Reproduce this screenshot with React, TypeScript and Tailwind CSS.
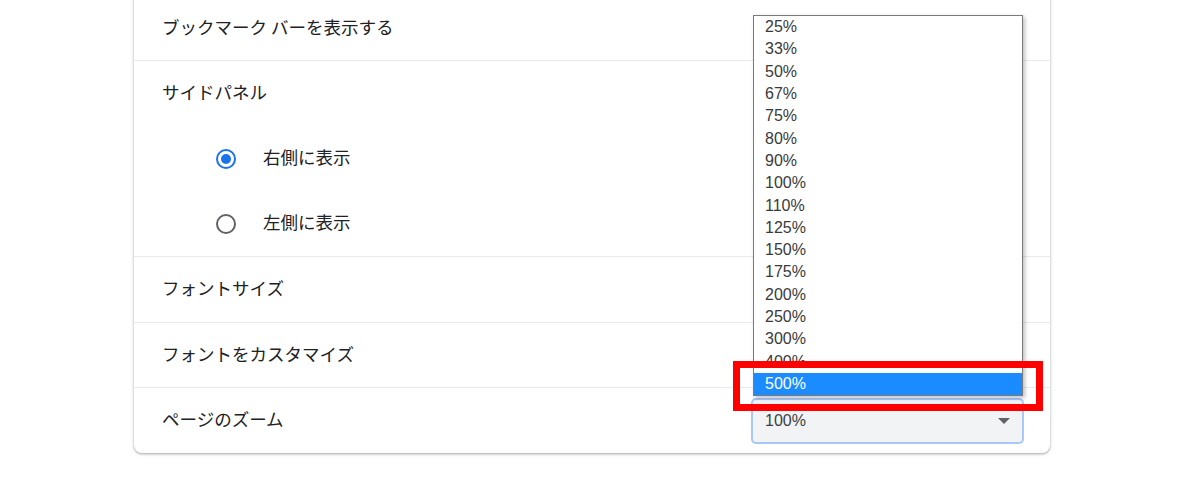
import { useMemo } from 'react'

const ZOOM_LEVELS = ['25%', '33%', '50%', '67%', '75%', '80%', '90%', '100%', '110%', '125%', '150%', '175%', '200%', '250%', '300%', '400%', '500%']

const jp = { fontFamily: '"Noto Sans CJK JP", "Noto Sans", sans-serif' }
const latin = { fontFamily: '"Liberation Sans", Arial, sans-serif' }

function Radio({ checked }: { checked: boolean }) {
  return (
    <span
      className={`flex h-[20px] w-[20px] items-center justify-center rounded-full border-2 ${
        checked ? 'border-[#1a73e8]' : 'border-[#5f6368]'
      }`}
    >
      {checked && <span className="h-[10px] w-[10px] rounded-full bg-[#1a73e8]" />}
    </span>
  )
}

export default function App() {
  const levels = useMemo(() => ZOOM_LEVELS, [])

  return (
    <div className="relative h-[485px] w-[1200px] overflow-hidden bg-white">
      {/* Settings card */}
      <div className="ml-[134px] mt-[-4px] w-[916px] rounded-b-lg bg-white shadow-[0_1px_2px_0_rgba(60,64,67,0.3),0_1px_3px_1px_rgba(60,64,67,0.15)]">
        <div className="flex h-[65px] items-center border-b border-[#e8eaed] pb-[2px] pl-7 text-[17.5px] text-[#202124]" style={jp}>
          ブックマーク バーを表示する
        </div>

        <div className="border-b border-[#e8eaed]">
          <div className="flex h-[65px] items-center pb-[2px] pl-7 text-[17.5px] text-[#202124]" style={jp}>
            サイドパネル
          </div>
          <div className="flex h-[65px] items-center pl-[82px]">
            <Radio checked />
            <span className="ml-[27px] pb-[2px] text-[17.5px] text-[#202124]" style={jp}>
              右側に表示
            </span>
          </div>
          <div className="flex h-[65px] items-center pl-[82px]">
            <Radio checked={false} />
            <span className="ml-[27px] pb-[2px] text-[17.5px] text-[#202124]" style={jp}>
              左側に表示
            </span>
          </div>
        </div>

        <div className="flex h-[66px] items-center border-b border-[#e8eaed] pb-[2px] pl-7 text-[17.5px] text-[#202124]" style={jp}>
          フォントサイズ
        </div>
        <div className="flex h-[65px] items-center border-b border-[#e8eaed] pb-[2px] pl-7 text-[17.5px] text-[#202124]" style={jp}>
          フォントをカスタマイズ
        </div>

        <div className="flex h-[65px] items-center justify-between pl-7 pr-[26px]">
          <span className="pb-[2px] text-[17.5px] text-[#202124]" style={jp}>
            ページのズーム
          </span>
          <div className="flex h-[46px] w-[273px] items-center justify-between rounded-[5px] border-2 border-[#a8c7fa] bg-[#f1f3f4] pl-[12px] pr-[12px]">
            <span className="text-[16px] text-[#3c4043]" style={latin}>
              100%
            </span>
            <svg width="12" height="6" viewBox="0 0 12 6">
              <path d="M0 0 L12 0 L6 6 Z" fill="#5f6368" />
            </svg>
          </div>
        </div>
      </div>

      {/* Open select popup */}
      <div className="absolute left-[753px] top-[15px] w-[270px] border border-[#7a7a7a] bg-white shadow-[2px_2px_4px_rgba(0,0,0,0.25)]">
        {levels.map((level) => (
          <div
            key={level}
            className={`flex h-[22.3px] items-center pl-[11px] text-[16px] ${
              level === '500%' ? 'bg-[#1a8cff] text-white' : 'text-[#3a3a3a]'
            }`}
            style={latin}
          >
            {level}
          </div>
        ))}
      </div>

      {/* Highlight box */}
      <div className="absolute left-[733px] top-[361px] h-[50px] w-[310px] border-[7px] border-[#ff0000]" />
    </div>
  )
}
